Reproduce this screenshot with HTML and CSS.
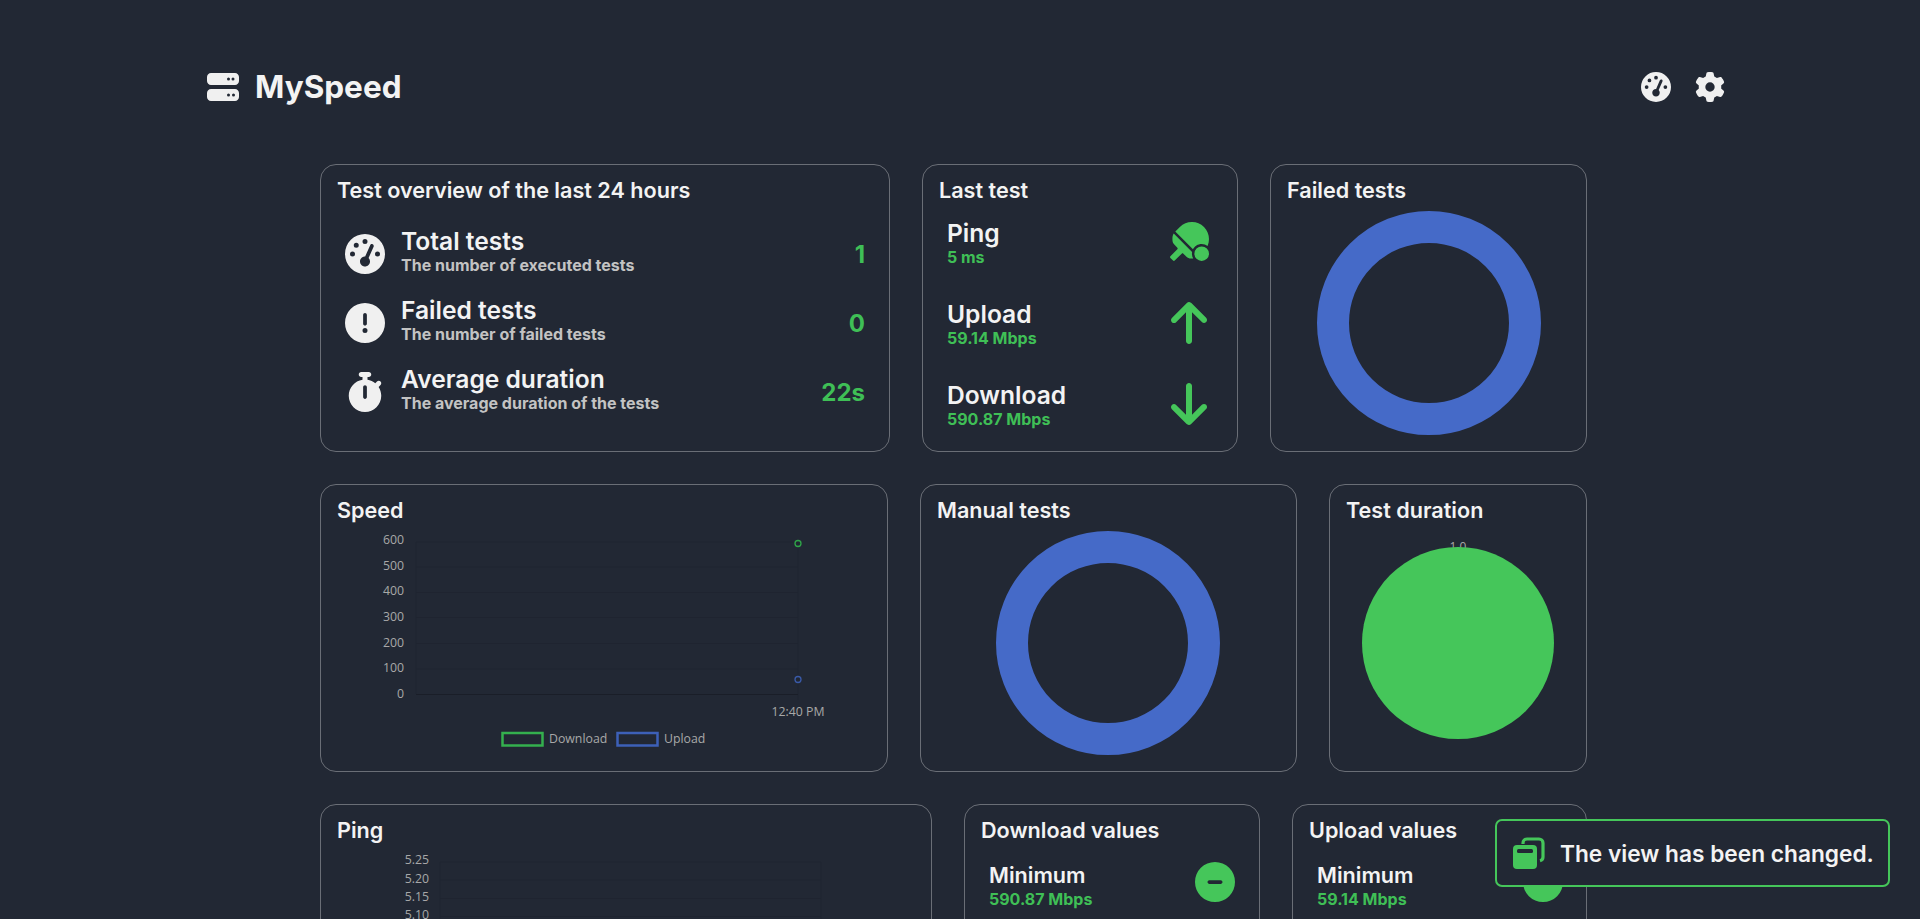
FILE: index.html
```html
<!DOCTYPE html>
<html lang="en">
<head>
  <meta charset="UTF-8" />
  <meta name="viewport" content="width=device-width, initial-scale=1.0" />
  <title>MySpeed</title>
  <link rel="stylesheet" href="styles.css">
</head>
<body>
<header class="header">
  <div class="brand">
    <svg class="brand-icon" viewBox="0 0 512 512"><path d="M64 32C28.7 32 0 60.7 0 96v64c0 35.3 28.7 64 64 64H448c35.3 0 64-28.7 64-64V96c0-35.3-28.7-64-64-64H64zm280 72a24 24 0 1 1 0 48 24 24 0 1 1 0-48zm48 24a24 24 0 1 1 48 0 24 24 0 1 1 -48 0zM64 288c-35.3 0-64 28.7-64 64v64c0 35.3 28.7 64 64 64H448c35.3 0 64-28.7 64-64V352c0-35.3-28.7-64-64-64H64zm280 72a24 24 0 1 1 0 48 24 24 0 1 1 0-48zm56 24a24 24 0 1 1 48 0 24 24 0 1 1 -48 0z"/></svg>
    <h1>MySpeed</h1>
  </div>
  <div class="header-actions">
    <svg class="action-icon" viewBox="0 0 512 512"><path d="M0 256a256 256 0 1 1 512 0A256 256 0 1 1 0 256zM288 96a32 32 0 1 0 -64 0 32 32 0 1 0 64 0zM256 416c35.3 0 64-28.7 64-64c0-17.4-6.9-33.1-18.1-44.6L366 161.7c5.3-12.1-.2-26.3-12.3-31.6s-26.3 .2-31.6 12.3L257.9 288c-.6 0-1.3 0-1.9 0c-35.3 0-64 28.7-64 64s28.7 64 64 64zM176 144a32 32 0 1 0 -64 0 32 32 0 1 0 64 0zM96 288a32 32 0 1 0 0-64 32 32 0 1 0 0 64zm352-32a32 32 0 1 0 -64 0 32 32 0 1 0 64 0z"/></svg>
    <svg class="action-icon" viewBox="0 0 512 512"><path d="M495.9 166.6c3.2 8.7 .5 18.4-6.4 24.6l-43.3 39.4c1.1 8.3 1.7 16.8 1.7 25.4s-.6 17.1-1.7 25.4l43.3 39.4c6.9 6.2 9.6 15.9 6.4 24.6c-4.4 11.9-9.7 23.3-15.8 34.3l-4.7 8.1c-6.6 11-14 21.4-22.1 31.2c-5.9 7.2-15.7 9.6-24.5 6.8l-55.7-17.7c-13.4 10.3-28.2 18.9-44 25.4l-12.5 57.1c-2 9.1-9 16.3-18.2 17.8c-13.8 2.3-28 3.5-42.5 3.5s-28.7-1.2-42.5-3.5c-9.2-1.5-16.2-8.7-18.2-17.8l-12.5-57.1c-15.8-6.5-30.6-15.1-44-25.4L83.1 425.9c-8.8 2.8-18.6 .3-24.5-6.8c-8.1-9.8-15.5-20.2-22.1-31.2l-4.7-8.1c-6.1-11-11.4-22.4-15.8-34.3c-3.2-8.7-.5-18.4 6.4-24.6l43.3-39.4C64.6 273.1 64 264.6 64 256s.6-17.1 1.7-25.4L22.4 191.2c-6.9-6.2-9.6-15.9-6.4-24.6c4.4-11.9 9.7-23.3 15.8-34.3l4.7-8.1c6.6-11 14-21.4 22.1-31.2c5.9-7.2 15.7-9.6 24.5-6.8l55.7 17.7c13.4-10.3 28.2-18.9 44-25.4l12.5-57.1c2-9.1 9-16.3 18.2-17.8C227.3 1.2 241.5 0 256 0s28.7 1.2 42.5 3.5c9.2 1.5 16.2 8.7 18.2 17.8l12.5 57.1c15.8 6.5 30.6 15.1 44 25.4l55.7-17.7c8.8-2.8 18.6-.3 24.5 6.8c8.1 9.8 15.5 20.2 22.1 31.2l4.7 8.1c6.1 11 11.4 22.4 15.8 34.3zM256 336a80 80 0 1 0 0-160 80 80 0 1 0 0 160z"/></svg>
  </div>
</header>

<main class="dashboard">
  <div class="row">
    <section class="card w-overview">
      <h2>Test overview of the last 24 hours</h2>
      <div class="stats">
        <div class="stat">
          <svg class="stat-icon" viewBox="0 0 512 512"><path d="M0 256a256 256 0 1 1 512 0A256 256 0 1 1 0 256zM288 96a32 32 0 1 0 -64 0 32 32 0 1 0 64 0zM256 416c35.3 0 64-28.7 64-64c0-17.4-6.9-33.1-18.1-44.6L366 161.7c5.3-12.1-.2-26.3-12.3-31.6s-26.3 .2-31.6 12.3L257.9 288c-.6 0-1.3 0-1.9 0c-35.3 0-64 28.7-64 64s28.7 64 64 64zM176 144a32 32 0 1 0 -64 0 32 32 0 1 0 64 0zM96 288a32 32 0 1 0 0-64 32 32 0 1 0 0 64zm352-32a32 32 0 1 0 -64 0 32 32 0 1 0 64 0z"/></svg>
          <div class="stat-text"><div class="stat-title">Total tests</div><div class="stat-desc">The number of executed tests</div></div>
          <div class="stat-value">1</div>
        </div>
        <div class="stat">
          <svg class="stat-icon" viewBox="0 0 512 512"><path d="M256 512A256 256 0 1 0 256 0a256 256 0 1 0 0 512zm0-384c13.3 0 24 10.7 24 24V264c0 13.3-10.7 24-24 24s-24-10.7-24-24V152c0-13.3 10.7-24 24-24zM224 352a32 32 0 1 1 64 0 32 32 0 1 1 -64 0z"/></svg>
          <div class="stat-text"><div class="stat-title">Failed tests</div><div class="stat-desc">The number of failed tests</div></div>
          <div class="stat-value">0</div>
        </div>
        <div class="stat">
          <svg class="stat-icon" viewBox="0 0 448 512"><path d="M176 0c-17.7 0-32 14.3-32 32s14.3 32 32 32h16V98.4C92.3 113.8 16 200 16 304c0 114.9 93.1 208 208 208s208-93.1 208-208c0-41.8-12.3-80.7-33.5-113.2l24.1-24.1c12.5-12.5 12.5-32.8 0-45.3s-32.8-12.5-45.3 0L355.7 143c-28.1-23-62.2-38.8-99.7-44.6V64h16c17.7 0 32-14.3 32-32s-14.3-32-32-32H224 176zm72 192V320c0 13.3-10.7 24-24 24s-24-10.7-24-24V192c0-13.3 10.7-24 24-24s24 10.7 24 24z"/></svg>
          <div class="stat-text"><div class="stat-title">Average duration</div><div class="stat-desc">The average duration of the tests</div></div>
          <div class="stat-value">22s</div>
        </div>
      </div>
    </section>

    <section class="card w-last">
      <h2>Last test</h2>
      <div class="values">
        <div class="value-row">
          <div><div class="value-title">Ping</div><div class="value-sub">5 ms</div></div>
          <svg class="value-icon paddle" viewBox="0 0 512 512"><path d="M416 288c-50.1 0-93.6 28.8-114.6 70.8L68.9 126.3l.6-.6 60.1-60.1c87.5-87.5 229.3-87.5 316.8 0c67.1 67.1 82.7 166.3 46.8 248.3C471.8 297.6 445 288 416 288zM49.3 151.9L290.1 392.7c-1.4 7.5-2.1 15.6-2.1 23.3c0 23.2 6.2 44.9 16.9 63.7c-3 .2-6.1 .3-9.2 .3H274.2c-21.9 0-42.9-8.7-58.4-24.2l-40.3-40.3c-6-6-16-6-22 0L62 507c-6 6-16 6-22 0L5 472c-6-6-6-16 0-22L96.5 358.5c6-6 6-16 0-22L56.2 296.2C40.7 280.7 32 259.7 32 237.8V216.3c0-23.3 6-45.8 17.3-64.4zM512 416a96 96 0 1 1-192 0 96 96 0 1 1 192 0z"/></svg>
        </div>
        <div class="value-row">
          <div><div class="value-title">Upload</div><div class="value-sub">59.14 Mbps</div></div>
          <svg class="value-icon arrow" viewBox="0 0 384 512"><path d="M214.6 41.4c-12.5-12.5-32.8-12.5-45.3 0l-160 160c-12.5 12.5-12.5 32.8 0 45.3s32.8 12.5 45.3 0L160 141.2V448c0 17.7 14.3 32 32 32s32-14.3 32-32V141.2L329.4 246.6c12.5 12.5 32.8 12.5 45.3 0s12.5-32.8 0-45.3l-160-160z"/></svg>
        </div>
        <div class="value-row">
          <div><div class="value-title">Download</div><div class="value-sub">590.87 Mbps</div></div>
          <svg class="value-icon arrow" viewBox="0 0 384 512"><path d="M169.4 470.6c12.5 12.5 32.8 12.5 45.3 0l160-160c12.5-12.5 12.5-32.8 0-45.3s-32.8-12.5-45.3 0L224 370.8 224 64c0-17.7-14.3-32-32-32s-32 14.3-32 32l0 306.7L54.6 265.4c-12.5-12.5-32.8-12.5-45.3 0s-12.5 32.8 0 45.3l160 160z"/></svg>
        </div>
      </div>
    </section>

    <section class="card w-failed">
      <h2>Failed tests</h2>
      <div class="donut"></div>
    </section>
  </div>

  <div class="row">
    <section class="card w-speed">
      <h2>Speed</h2>
      <svg class="chart" width="534" height="240" viewBox="337 526 534 240">
        <g class="grid">
          <path d="M416 542H798M416 567H798M416 592.500H798M416 617.500H798M416 643.500H798M416 669H798"/>
          <path d="M416 542V694M798 542V700"/>
          <path class="axis" d="M416 694.500H798"/>
        </g>
        <g class="tick-y">
          <text x="404" y="544">600</text><text x="404" y="570">500</text><text x="404" y="595">400</text><text x="404" y="621">300</text><text x="404" y="647">200</text><text x="404" y="672">100</text><text x="404" y="698">0</text>
        </g>
        <text class="tick-x" x="798" y="716">12:40 PM</text>
        <circle cx="798" cy="543.500" r="3" class="pt-green"/>
        <circle cx="798" cy="679.500" r="3" class="pt-blue"/>
        <rect x="502.500" y="733" width="40" height="12.500" class="leg-green"/>
        <text class="leg-text" x="549" y="742.500">Download</text>
        <rect x="617.500" y="733" width="40" height="12.500" class="leg-blue"/>
        <text class="leg-text" x="664" y="742.500">Upload</text>
      </svg>
    </section>

    <section class="card w-manual">
      <h2>Manual tests</h2>
      <div class="donut"></div>
    </section>

    <section class="card w-duration">
      <h2>Test duration</h2>
      <div class="pie-wrap">
        <div class="pie-label">1.0</div>
        <div class="pie"></div>
      </div>
    </section>
  </div>

  <div class="row">
    <section class="card w-ping">
      <h2>Ping</h2>
      <svg class="chart" width="580" height="80" viewBox="337 846 580 80">
        <g class="grid">
          <path d="M440 862H821M440 880H821M440 898.500H821M440 916.500H821"/>
          <path d="M440 862V926M821 862V926"/>
        </g>
        <g class="tick-y">
          <text x="429" y="864">5.25</text><text x="429" y="883">5.20</text><text x="429" y="901">5.15</text><text x="429" y="919">5.10</text>
        </g>
      </svg>
    </section>

    <section class="card w-down">
      <h2>Download values</h2>
      <div class="values">
        <div class="value-row">
          <div><div class="value-title">Minimum</div><div class="value-sub">590.87 Mbps</div></div>
          <svg class="value-icon" viewBox="0 0 512 512"><path d="M256 512A256 256 0 1 0 256 0a256 256 0 1 0 0 512zM184 232H328c13.3 0 24 10.7 24 24s-10.7 24-24 24H184c-13.3 0-24-10.7-24-24s10.7-24 24-24z"/></svg>
        </div>
      </div>
    </section>

    <section class="card w-up">
      <h2>Upload values</h2>
      <div class="values">
        <div class="value-row">
          <div><div class="value-title">Minimum</div><div class="value-sub">59.14 Mbps</div></div>
          <svg class="value-icon" viewBox="0 0 512 512"><path d="M256 512A256 256 0 1 0 256 0a256 256 0 1 0 0 512zM184 232H328c13.3 0 24 10.7 24 24s-10.7 24-24 24H184c-13.3 0-24-10.7-24-24s10.7-24 24-24z"/></svg>
        </div>
      </div>
    </section>
  </div>
</main>

<div class="toast">
  <svg class="toast-icon" viewBox="0 0 32 32">
    <path class="toast-back" d="M10 7V6a4 4 0 0 1 4-4H26a4 4 0 0 1 4 4V20a4 4 0 0 1-3 3.800"/>
    <rect x="0" y="8" width="24" height="24" rx="4"/>
    <rect class="toast-band" x="4" y="12" width="16" height="4" rx="1.500"/>
  </svg>
  <span>The view has been changed.</span>
</div>
</body>
</html>
```

FILE: styles.css
```css
* {
  box-sizing: border-box;
}
html, body {
  height: 100%;
  overflow: hidden;
}
body {
  margin: 0;
  font-family: "Inter", sans-serif;
  background-color: #222834;
  color: #f3f3f3;
}
h1, h2 {
  margin: 0;
}
.header {
  display: flex;
  justify-content: space-between;
  align-items: center;
  height: 56px;
  margin-top: 59px;
  padding: 0 195px 0 207px;
}
.brand {
  display: flex;
  align-items: center;
  gap: 16px;
}
.brand-icon {
  width: 32px;
  height: 32px;
  fill: #f0f0f0;
}
.brand h1 {
  font-size: 31.500px;
  font-weight: 700;
  position: relative;
  top: -1px;
}
.header-actions {
  display: flex;
  gap: 24px;
}
.action-icon {
  width: 30px;
  height: 30px;
  fill: #f0f0f0;
}
.dashboard {
  display: flex;
  flex-direction: column;
  gap: 32px;
  width: 1267px;
  margin: 49px 0 0 320px;
}
.row {
  display: flex;
  justify-content: space-between;
  height: 288px;
  flex: none;
}
.card {
  border: 1px solid #6a6e76;
  border-radius: 16px;
  padding: 14px 16px;
  display: flex;
  flex-direction: column;
}
.card h2 {
  font-size: 21.600px;
  font-weight: 600;
  line-height: 24px;
  margin: -1px 0 1px;
}
.w-overview { width: 570px; }
.w-last { width: 316px; }
.w-failed { width: 317px; }
.w-speed { width: 568px; }
.w-manual { width: 377px; }
.w-duration { width: 258px; }
.w-ping { width: 612px; }
.w-down { width: 296px; }
.w-up { width: 295px; }

.stats {
  display: flex;
  flex-direction: column;
  gap: 19px;
  margin: 26px 8px 0 8px;
}
.stat {
  display: flex;
  align-items: center;
  height: 50px;
}
.stat-icon {
  width: 40px;
  height: 40px;
  fill: #f0f0f0;
  flex: none;
}
.stat-text {
  margin: 0 0 6px 16px;
  flex: 1;
}
.stat-title {
  font-size: 24.600px;
  font-weight: 600;
  line-height: 28px;
}
.stat-desc {
  font-size: 16px;
  font-weight: 700;
  line-height: 20px;
  color: #c3c3c3;
}
.stat-value {
  font-size: 24px;
  font-weight: 700;
  color: #3fbf56;
}

.values {
  display: flex;
  flex-direction: column;
  gap: 31px;
  margin: 15px 12px 0 8px;
}
.value-row {
  display: flex;
  justify-content: space-between;
  align-items: center;
  height: 50px;
}
.value-title {
  font-size: 24.600px;
  font-weight: 600;
  line-height: 28px;
}
.value-sub {
  font-size: 16px;
  font-weight: 700;
  line-height: 20px;
  color: #3fbf56;
}
.value-icon {
  width: 40px;
  height: 40px;
  fill: #45c65a;
  margin-top: -6px;
}
.value-icon.paddle {
  width: 39px;
  height: 39px;
  margin-top: -3px;
}
.value-icon.arrow {
  width: 36px;
  height: 48px;
  margin: -2px 2px 0 0;
}
.w-down .values, .w-up .values {
  margin-top: 17px;
  margin-right: 8px;
}
.w-up .values {
  margin-right: 7px;
}
.w-down .value-title, .w-up .value-title {
  font-size: 21.600px;
}

.donut {
  width: 224px;
  height: 224px;
  margin: 8px auto 0;
  border: 32px solid #456ac8;
  border-radius: 50%;
}
.w-manual .donut {
  margin-left: 59px;
}
.pie-wrap {
  position: relative;
  margin-top: 24px;
}
.pie {
  width: 192px;
  height: 192px;
  margin: 0 auto;
  background-color: #45c65a;
  border-radius: 50%;
  position: relative;
}
.pie-label {
  position: absolute;
  top: -9px;
  left: 0;
  right: 0;
  text-align: center;
  font-family: "Open Sans", sans-serif;
  font-size: 12px;
  color: #a8a8a8;
}

.chart {
  display: block;
  margin-top: 3px;
  overflow: visible;
}
.grid path {
  fill: none;
  stroke: #1f2430;
  stroke-width: 1;
}
.grid path.axis {
  stroke: #1a1e28;
}
.tick-y text {
  text-anchor: end;
  font-family: "Open Sans", sans-serif;
  font-size: 12.300px;
  fill: #a8a8a8;
}
.tick-x {
  text-anchor: middle;
  font-family: "Open Sans", sans-serif;
  font-size: 12.300px;
  fill: #a8a8a8;
}
.leg-text {
  font-family: "Open Sans", sans-serif;
  font-size: 12.300px;
  fill: #a8a8a8;
}
.pt-green, .leg-green {
  fill: none;
  stroke: #34b04e;
}
.pt-blue, .leg-blue {
  fill: none;
  stroke: #3d60b8;
}
.pt-green {
  stroke: #2fa548;
  stroke-width: 1.300;
}
.pt-blue {
  stroke: #3a5aa8;
  stroke-width: 1.300;
}
.leg-green, .leg-blue {
  stroke-width: 2.500;
}

.toast {
  position: absolute;
  right: 30px;
  bottom: 32px;
  display: flex;
  align-items: center;
  gap: 15px;
  width: 395px;
  height: 68px;
  padding: 0 0 0 16px;
  background-color: #222834;
  border: 2px solid #45c65a;
  border-radius: 7px;
  font-size: 22.700px;
  font-weight: 600;
  white-space: nowrap;
}
.toast-icon {
  width: 32px;
  height: 32px;
  fill: #45c65a;
  flex: none;
}
.toast-back {
  fill: none;
  stroke: #45c65a;
  stroke-width: 3.200;
}
.toast-band {
  fill: #222834;
}
```
